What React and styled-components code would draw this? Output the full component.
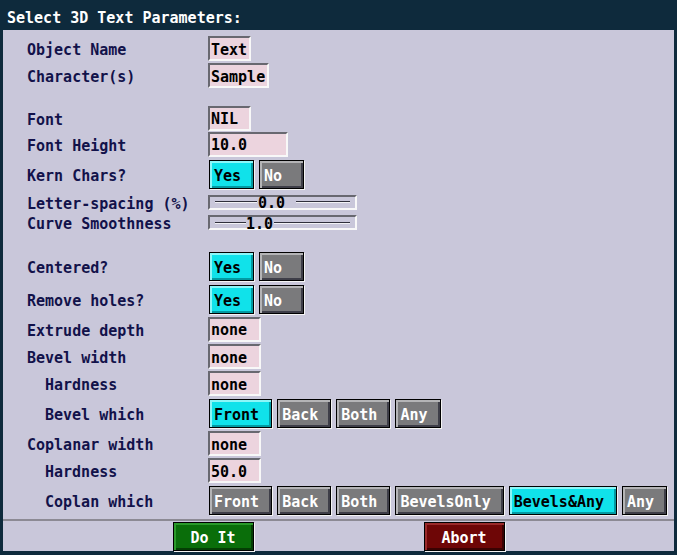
import React from "react";
import styled, { createGlobalStyle, css } from "styled-components";

const GlobalStyle = createGlobalStyle`
  html, body { margin: 0; padding: 0; background: #0e2a3c; }
  body { font-family: "DejaVu Sans Mono", "Liberation Mono", monospace; }
`;

const FONT = `"DejaVu Sans Mono", "Liberation Mono", monospace`;

const Window = styled.div`
  width: 677px;
  height: 555px;
  display: flex;
  flex-direction: column;
  background: #0e2a3c;
  font-family: ${FONT};
  font-weight: bold;
  font-size: 15px;
  box-sizing: border-box;
`;

const TitleBar = styled.div`
  height: 30px;
  flex: none;
  box-sizing: border-box;
  padding: 5px 0 0 7px;
  display: flex;
  align-items: center;
  color: #ffffff;
  font-size: 15px;
`;

const Panel = styled.div`
  flex: 1;
  margin: 0 3px 4px 3px;
  background: #c9c7da;
  display: flex;
  flex-direction: column;
`;

const Form = styled.div`
  flex: 1;
  display: flex;
  flex-direction: column;
  padding: 5px 0 0 24px;
`;

const Row = styled.div`
  height: ${(p) => p.$h}px;
  display: grid;
  grid-template-columns: 181px auto;
  align-items: center;
`;

const Label = styled.div`
  padding: 4px 0 0 ${(p) => (p.$indent ? 18 : 0)}px;
  color: #12124a;
  white-space: pre;
  line-height: 1;
`;

const Spacer = styled.div`
  height: ${(p) => p.$h}px;
  flex: none;
`;

const Field = styled.div`
  width: ${(p) => p.$w}px;
  height: 25px;
  box-sizing: border-box;
  border-style: solid;
  border-width: 2px;
  border-color: #686870 #f8f8f8 #f8f8f8 #686870;
  background: #ecd4de;
  color: #000;
  display: flex;
  align-items: center;
  padding: 3px 0 0 1px;
  white-space: pre;
  line-height: 1;
`;

const OptionGroup = styled.div`
  display: flex;
  gap: 5px;
  margin-left: 1px;
`;

const tones = {
  on: css`
    background: #10e2ea;
    color: #000;
    box-shadow: inset 2px 2px 0 #8cf6f8, inset -2px -2px 0 #039aa2, 1px 1px 0 #f4f4f4;
  `,
  off: css`
    background: #7a7a7c;
    color: #fff;
    box-shadow: inset 2px 2px 0 #b4b4b6, inset -2px -2px 0 #3e3e48, 1px 1px 0 #f4f4f4;
  `,
  go: css`
    background: #0a6e0a;
    color: #fff;
    box-shadow: inset 2px 2px 0 #2a9a2a, inset -2px -2px 0 #043e04, 1px 1px 0 #f4f4f4;
  `,
  stop: css`
    background: #6e0606;
    color: #fff;
    box-shadow: inset 2px 2px 0 #9a2a2a, inset -2px -2px 0 #3a0202, 1px 1px 0 #f4f4f4;
  `,
};

const OptionButton = styled.button`
  all: unset;
  box-sizing: border-box;
  height: 29px;
  min-width: 45px;
  padding: 4px 12px 0 4px;
  border: 1px solid #000;
  font-family: ${FONT};
  font-weight: bold;
  font-size: 15px;
  line-height: 1;
  display: flex;
  align-items: center;
  white-space: pre;
  ${(p) => (p.$on ? tones.on : tones.off)}
`;

const Slider = styled.div`
  width: 149px;
  height: 15px;
  box-sizing: border-box;
  border-style: solid;
  border-width: 2px;
  border-color: #686870 #f8f8f8 #f8f8f8 #686870;
  padding: 0 5px;
  display: flex;
  align-items: center;
`;

const Line = styled.div`
  height: 1px;
  background: #30303c;
  border-bottom: 1px solid #f2f2f6;
  flex: ${(p) => (p.$grow ? 1 : "none")};
`;

const Knob = styled.span`
  color: #000;
  line-height: 1;
  padding-top: 3px;
  flex: none;
`;

const Separator = styled.div`
  height: 2px;
  flex: none;
  background: #8c8a94;
`;

const Footer = styled.div`
  height: 30px;
  flex: none;
  box-sizing: border-box;
  padding-top: 1px;
  display: flex;
  justify-content: center;
  align-items: flex-start;
  gap: 170px;
`;

const ActionButton = styled.button`
  all: unset;
  box-sizing: border-box;
  width: 81px;
  height: 29px;
  padding-top: 4px;
  border: 1px solid #000;
  font-family: ${FONT};
  font-weight: bold;
  font-size: 15px;
  line-height: 1;
  display: flex;
  align-items: center;
  justify-content: center;
  white-space: pre;
  ${(p) => tones[p.$tone]}
`;

function SliderControl({ value, lead, gapL, gapR }) {
  return (
    <Slider>
      <Line style={{ width: lead }} />
      <Knob style={{ marginLeft: gapL, marginRight: gapR }}>{value}</Knob>
      <Line $grow />
    </Slider>
  );
}

function Options({ items, selected }) {
  return (
    <OptionGroup>
      {items.map((it) => (
        <OptionButton key={it} $on={it === selected}>
          {it}
        </OptionButton>
      ))}
    </OptionGroup>
  );
}

const rows = [
  { h: 27, label: "Object Name", field: "Text", w: 43 },
  { h: 27, label: "Character(s)", field: "Sample", w: 61 },
  { spacer: 16 },
  { h: 26, label: "Font", field: "NIL", w: 43 },
  { h: 26, label: "Font Height", field: "10.0", w: 80 },
  { h: 35, label: "Kern Chars?", options: ["Yes", "No"], sel: "Yes" },
  { h: 20, label: "Letter-spacing (%)", slider: { value: "0.0", lead: 42, gapL: 1, gapR: 11 } },
  { h: 21, label: "Curve Smoothness", slider: { value: "1.0", lead: 31, gapL: 0, gapR: 1 } },
  { spacer: 16 },
  { h: 35, label: "Centered?", options: ["Yes", "No"], sel: "Yes" },
  { h: 31, label: "Remove holes?", options: ["Yes", "No"], sel: "Yes" },
  { h: 28, label: "Extrude depth", field: "none", w: 53 },
  { h: 27, label: "Bevel width", field: "none", w: 53 },
  { h: 27, label: "Hardness", indent: true, field: "none", w: 53 },
  { h: 33, label: "Bevel which", indent: true, options: ["Front", "Back", "Both", "Any"], sel: "Front" },
  { h: 27, label: "Coplanar width", field: "none", w: 53 },
  { h: 27, label: "Hardness", indent: true, field: "50.0", w: 53 },
  {
    h: 33,
    label: "Coplan which",
    indent: true,
    options: ["Front", "Back", "Both", "BevelsOnly", "Bevels&Any", "Any"],
    sel: "Bevels&Any",
  },
];

export default function App() {
  return (
    <>
      <GlobalStyle />
      <Window>
        <TitleBar>Select 3D Text Parameters:</TitleBar>
        <Panel>
          <Form>
            {rows.map((r, i) =>
              r.spacer ? (
                <Spacer key={i} $h={r.spacer} />
              ) : (
                <Row key={i} $h={r.h}>
                  <Label $indent={r.indent}>{r.label}</Label>
                  <div>
                    {r.field !== undefined && <Field $w={r.w}>{r.field}</Field>}
                    {r.options && <Options items={r.options} selected={r.sel} />}
                    {r.slider && <SliderControl {...r.slider} />}
                  </div>
                </Row>
              )
            )}
          </Form>
          <Separator />
          <Footer>
            <ActionButton $tone="go">Do It</ActionButton>
            <ActionButton $tone="stop">Abort</ActionButton>
          </Footer>
        </Panel>
      </Window>
    </>
  );
}
